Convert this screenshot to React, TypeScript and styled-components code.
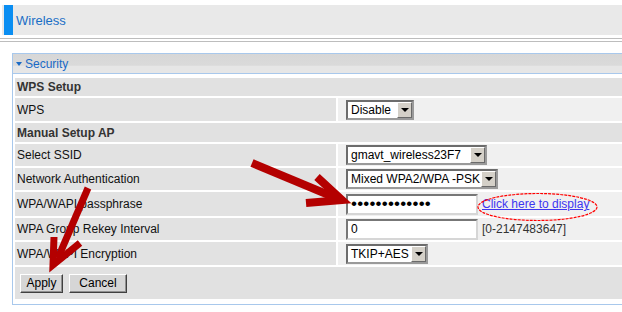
import React from "react";
import styled, { createGlobalStyle } from "styled-components";

const GlobalStyle = createGlobalStyle`
  html, body {
    margin: 0;
    padding: 0;
    background: #fff;
    overflow: hidden;
  }
  body {
    font-family: "Liberation Sans", Arial, sans-serif;
    font-size: 12px;
    color: #000;
  }
`;

const Page = styled.div`
  position: relative;
  width: 622px;
  height: 312px;
  overflow: hidden;
  padding-top: 5px;
  box-sizing: border-box;
`;

const TitleBar = styled.div`
  display: flex;
  align-items: center;
  height: 30px;
  margin-left: 2px;
  padding-left: 2px;
  background: #e9e9e9;
`;

const Accent = styled.span`
  align-self: stretch;
  width: 9px;
  margin-right: 3px;
  background: #0a8ef2;
`;

const Title = styled.h1`
  margin: 0;
  font-size: 13px;
  font-weight: normal;
  color: #1a6fc6;
`;

const Divider = styled.div`
  height: 2px;
  margin-top: 3px;
  border-top: 1px solid #bdbdbd;
  border-bottom: 1px solid #bdbdbd;
`;

const Panel = styled.section`
  width: 640px;
  margin: 11px 0 0 12px;
  border: 1px solid #a8c8ec;
`;

const PanelHeader = styled.div`
  display: flex;
  align-items: center;
  height: 19px;
  padding-left: 3px;
  border-bottom: 1px solid #a8c8ec;
  background: linear-gradient(to bottom, #d7d7d7 0%, #dadada 60%, #e6e6e6 62%, #e6e6e6 100%);
  color: #1a6ac6;
  font-size: 12px;
`;

const Caret = styled.span`
  width: 0;
  height: 0;
  margin-right: 3px;
  border-left: 3px solid transparent;
  border-right: 3px solid transparent;
  border-top: 4px solid #1a6ac6;
`;

const Table = styled.div`
  display: flex;
  flex-direction: column;
  gap: 2px;
  padding: 4px 2px 5px 2px;
`;

const Row = styled.div<{ $h: number }>`
  display: grid;
  grid-template-columns: 321px 1fr;
  gap: 2px;
  height: ${(p) => p.$h}px;
`;

const SectionRow = styled.div<{ $h: number }>`
  display: flex;
  align-items: center;
  height: ${(p) => p.$h}px;
  padding-left: 2px;
  background: #e1e1e1;
  color: #333;
  font-weight: bold;
`;

const LabelCell = styled.div`
  display: flex;
  align-items: center;
  padding-left: 2px;
  background: #e2e2e2;
  color: #111;
  white-space: nowrap;
`;

const ValueCell = styled.div`
  display: flex;
  align-items: center;
  gap: 4px;
  padding-left: 8px;
  background: #f0f0f0;
  white-space: nowrap;
`;

const SelectBox = styled.div<{ $w: number }>`
  display: flex;
  align-items: stretch;
  width: ${(p) => p.$w}px;
  height: 20px;
  box-sizing: border-box;
  border: 2px solid;
  border-color: #6c6c6c #9a9a9a #9a9a9a #6c6c6c;
  background: #fff;
  font-size: 12px;
`;

const SelectText = styled.span`
  flex: 1;
  display: flex;
  align-items: center;
  padding-left: 3px;
  overflow: hidden;
`;

const DropButton = styled.span`
  display: flex;
  align-items: center;
  justify-content: center;
  width: 15px;
  box-sizing: border-box;
  border: 1px solid;
  border-color: #fff #6a6a6a #6a6a6a #fff;
  background: #d4d0c8;

  &::after {
    content: "";
    border-left: 4px solid transparent;
    border-right: 4px solid transparent;
    border-top: 4px solid #000;
  }
`;

const TextInput = styled.input`
  width: 132px;
  height: 21px;
  box-sizing: border-box;
  margin: 0;
  padding: 0 3px;
  border: 2px solid;
  border-color: #777 #d6d6d6 #d6d6d6 #777;
  background: #fff;
  font-family: "Liberation Sans", Arial, sans-serif;
  font-size: 12px;
  color: #000;
  outline: none;
`;

const PasswordInput = styled(TextInput)`
  font-size: 17px;
  letter-spacing: 0.2px;
`;

const ShowLink = styled.a`
  color: #3d35f0;
  text-decoration: underline;
  font-size: 12px;
  cursor: pointer;
`;

const Hint = styled.span`
  color: #333;
  font-size: 12px;
`;

const ButtonRow = styled.div`
  display: flex;
  align-items: center;
  gap: 6px;
  height: 32px;
  padding-left: 5px;
  background: #e1e1e1;
`;

const Button = styled.button<{ $w: number }>`
  width: ${(p) => p.$w}px;
  height: 19px;
  margin: 0;
  padding: 0;
  border: 1px solid;
  border-color: #fff #404040 #404040 #fff;
  box-shadow: inset -1px -1px 0 #909090;
  background: #d6d6d6;
  font-family: "Liberation Sans", Arial, sans-serif;
  font-size: 12px;
  color: #000;
`;

const Overlay = styled.svg`
  position: absolute;
  top: 0;
  left: 0;
  pointer-events: none;
`;

const Select = ({ value, width }: { value: string; width: number }) => (
  <SelectBox $w={width}>
    <SelectText>{value}</SelectText>
    <DropButton />
  </SelectBox>
);

const App = () => {
  return (
    <Page>
      <GlobalStyle />
      <TitleBar>
        <Accent />
        <Title>Wireless</Title>
      </TitleBar>
      <Divider />
      <Panel>
        <PanelHeader>
          <Caret />
          Security
        </PanelHeader>
        <Table>
          <SectionRow $h={18}>WPS Setup</SectionRow>
          <Row $h={23}>
            <LabelCell>WPS</LabelCell>
            <ValueCell>
              <Select value="Disable" width={68} />
            </ValueCell>
          </Row>
          <SectionRow $h={19}>Manual Setup AP</SectionRow>
          <Row $h={22}>
            <LabelCell>Select SSID</LabelCell>
            <ValueCell>
              <Select value="gmavt_wireless23F7" width={141} />
            </ValueCell>
          </Row>
          <Row $h={22}>
            <LabelCell>Network Authentication</LabelCell>
            <ValueCell>
              <Select value="Mixed WPA2/WPA -PSK" width={152} />
            </ValueCell>
          </Row>
          <Row $h={24}>
            <LabelCell>WPA/WAPI passphrase</LabelCell>
            <ValueCell>
              <PasswordInput type="password" readOnly value="gmavtwireless" />
              <ShowLink>Click here to display</ShowLink>
            </ValueCell>
          </Row>
          <Row $h={22}>
            <LabelCell>WPA Group Rekey Interval</LabelCell>
            <ValueCell>
              <TextInput type="text" readOnly value="0" />
              <Hint>[0-2147483647]</Hint>
            </ValueCell>
          </Row>
          <Row $h={23}>
            <LabelCell>WPA/WAPI Encryption</LabelCell>
            <ValueCell>
              <Select value="TKIP+AES" width={82} />
            </ValueCell>
          </Row>
          <ButtonRow>
            <Button $w={43}>Apply</Button>
            <Button $w={58}>Cancel</Button>
          </ButtonRow>
        </Table>
      </Panel>

      <Overlay width="622" height="312" viewBox="0 0 622 312">
        <ellipse
          cx="537.5"
          cy="207"
          rx="59.5"
          ry="13.5"
          fill="none"
          stroke="#ff0000"
          strokeWidth="1.2"
          strokeDasharray="3 1"
        />
        <g stroke="#b40000" fill="none" strokeLinecap="butt" strokeLinejoin="miter">
          <line x1="252" y1="163" x2="336" y2="198" strokeWidth="8" />
          <polyline points="317,177 342,200 306,203" strokeWidth="8" />
          <line x1="88" y1="188" x2="58" y2="258" strokeWidth="7" />
          <polyline points="54,237 53,265 80,243" strokeWidth="7" />
        </g>
      </Overlay>
    </Page>
  );
};

export default App;
